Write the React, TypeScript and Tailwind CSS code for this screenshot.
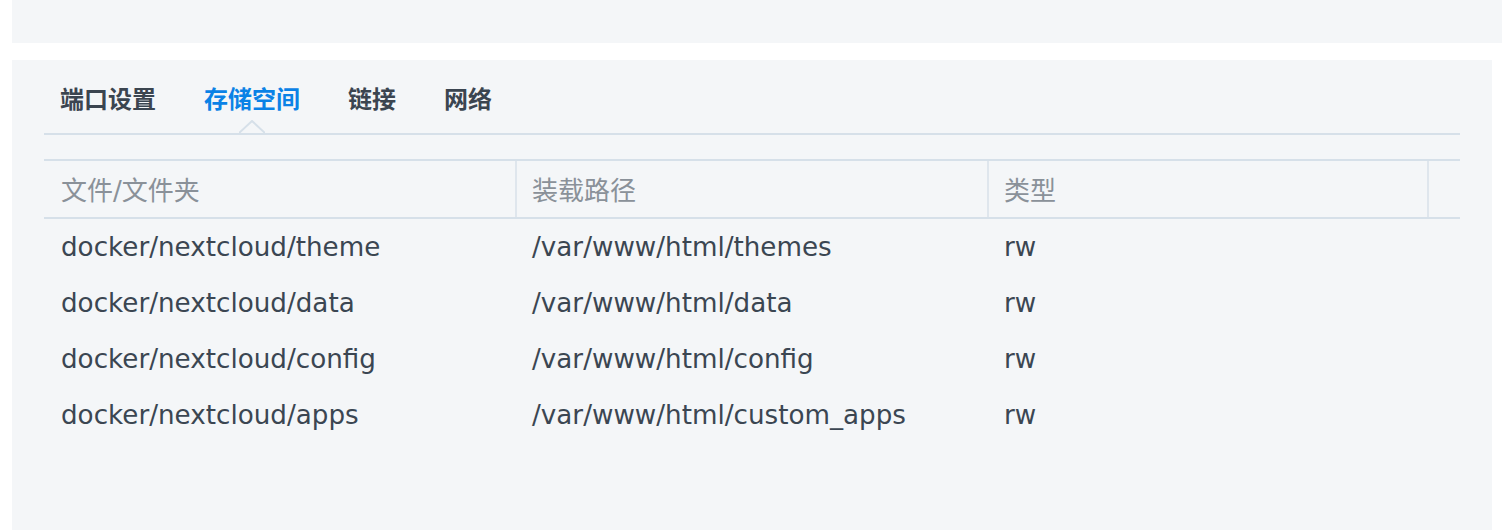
const tabs = ["端口设置", "存储空间", "链接", "网络"];

const volumes = [
  { folder: "docker/nextcloud/theme", mount: "/var/www/html/themes", type: "rw" },
  { folder: "docker/nextcloud/data", mount: "/var/www/html/data", type: "rw" },
  { folder: "docker/nextcloud/config", mount: "/var/www/html/config", type: "rw" },
  { folder: "docker/nextcloud/apps", mount: "/var/www/html/custom_apps", type: "rw" },
];

const cols = "grid grid-cols-[471px_472px_440px_1fr]";

export default function App() {
  return (
    <div className="h-[530px] w-[1502px] bg-white pl-[12px] font-['DejaVu_Sans','Noto_Sans_CJK_SC',sans-serif]">
      <div className="h-[43px] bg-[#f4f6f8]" />
      <div className="mr-[10px] mt-[17px] h-[470px] bg-[#f4f6f8] px-[32px]">
        {/* tab bar */}
        <div className="flex gap-[48px] border-b-2 border-[#d6e0e9] pb-[18px] pl-[16px] pt-[21px]">
          {tabs.map((t, i) => (
            <div
              key={t}
              className={`relative font-['Noto_Sans_CJK_SC',sans-serif] text-[24px] font-bold leading-[34px] ${
                i === 1 ? "text-[#0a82e6]" : "text-[#3b4550]"
              }`}
            >
              {t}
              {i === 1 && (
                <svg
                  className="absolute left-1/2 top-[39px] -ml-[13px]"
                  width="26"
                  height="14"
                  viewBox="0 0 26 14"
                >
                  <polyline points="0,13 13,1 26,13" fill="#f4f6f8" stroke="#d6e0e9" strokeWidth="2" />
                </svg>
              )}
            </div>
          ))}
        </div>

        {/* volume table */}
        <div className="mt-[24px] border-t-2 border-[#d6e0e9]">
          <div className={`${cols} h-[58px] border-b-2 border-[#d6e0e9] text-[26px] text-[#8a9199]`}>
            <div className="flex items-center pl-[17px] pt-[4px]">文件/文件夹</div>
            <div className="flex items-center border-l-2 border-[#dfe6ed] pl-[15px] pt-[4px]">装载路径</div>
            <div className="flex items-center border-l-2 border-[#dfe6ed] pl-[15px] pt-[4px]">类型</div>
            <div className="border-l-2 border-[#dfe6ed]" />
          </div>
          {volumes.map((v) => (
            <div key={v.folder} className={`${cols} h-[56px] items-center pt-[2px] text-[26.2px] text-[#3b4652]`}>
              <div className="pl-[17px]">{v.folder}</div>
              <div className="pl-[17px]">{v.mount}</div>
              <div className="pl-[17px]">{v.type}</div>
              <div />
            </div>
          ))}
        </div>
      </div>
    </div>
  );
}
